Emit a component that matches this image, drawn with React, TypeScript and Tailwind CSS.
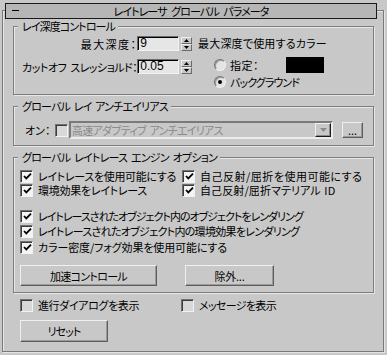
import React from "react";

const BG = "bg-[#c8c8c8]";

function Check({ checked = false, gray = false }: { checked?: boolean; gray?: boolean }) {
  return (
    <span
      className={
        "relative flex items-center justify-center w-[13px] h-[13px] shrink-0 border border-t-[#707070] border-l-[#707070] border-b-[#f2f2f2] border-r-[#f2f2f2] shadow-[inset_1px_1px_0_#3c3c3c] " +
        (gray ? "bg-[#d8d8d8]" : checked ? "bg-[#f4f4f4]" : "bg-[#dcdcdc]")
      }
    >
      {checked && (
        <svg width="9" height="9" viewBox="0 0 9 9" className="ml-[1px] mt-[1px]">
          <path d="M1 4 L3.3 6.4 L8 1.6" fill="none" stroke="#000" strokeWidth="1.8" />
        </svg>
      )}
    </span>
  );
}

function Radio({ selected = false }: { selected?: boolean }) {
  return (
    <span className="relative flex items-center justify-center w-[12px] h-[12px] shrink-0 rounded-full border border-t-[#707070] border-l-[#707070] border-b-[#f0f0f0] border-r-[#f0f0f0] bg-[#e4e4e4] shadow-[inset_1px_1px_0_#9a9a9a]">
      {selected && <span className="w-[4px] h-[4px] rounded-full bg-black" />}
    </span>
  );
}

function Btn({ label, w, h, tr }: { label: string; w: string; h: string; tr: string }) {
  return (
    <div
      className={
        "flex items-center justify-center border border-t-[#f0f0f0] border-l-[#f0f0f0] border-b-[#5e5e5e] border-r-[#5e5e5e] shadow-[inset_-1px_-1px_0_#9a9a9a] " +
        BG +
        " " +
        w +
        " " +
        h
      }
    >
      <span className={"leading-[14px] whitespace-nowrap " + tr}>{label}</span>
    </div>
  );
}

function Spinner() {
  return (
    <div className="flex flex-col ml-[2px] w-[11px] h-[14px]">
      <div className="flex-1 flex items-center justify-center border border-t-[#f0f0f0] border-l-[#f0f0f0] border-b-[#6a6a6a] border-r-[#6a6a6a]">
        <svg width="5" height="3" viewBox="0 0 5 3">
          <path d="M2.5 0 L5 3 L0 3 Z" fill="#000" />
        </svg>
      </div>
      <div className="flex-1 flex items-center justify-center border border-t-[#f0f0f0] border-l-[#f0f0f0] border-b-[#6a6a6a] border-r-[#6a6a6a]">
        <svg width="5" height="3" viewBox="0 0 5 3">
          <path d="M0 0 L5 0 L2.5 3 Z" fill="#000" />
        </svg>
      </div>
    </div>
  );
}

function Input({ value }: { value: string }) {
  return (
    <div className="flex items-center w-[42px] h-[15px] border border-t-[#6a6a6a] border-l-[#6a6a6a] border-b-[#f2f2f2] border-r-[#f2f2f2] shadow-[inset_1px_1px_0_#000] bg-[#e6e6e6] pl-[2px]">
      <span className="leading-[13px] font-['Liberation_Sans',sans-serif] text-[12px]">{value}</span>
    </div>
  );
}

function Group({
  label,
  tr,
  className,
  children,
}: {
  label: string;
  tr: string;
  className: string;
  children?: React.ReactNode;
}) {
  return (
    <div
      className={
        "relative ml-[10px] w-[361px] border border-[#7e7e7e] shadow-[1px_1px_0_#e6e6e6,inset_1px_1px_0_#e6e6e6] " +
        className
      }
    >
      <span className={"absolute left-[4px] top-[-8px] pl-[4px] pr-[3px] leading-[14px] whitespace-nowrap " + BG + " " + tr}>
        {label}
      </span>
      {children}
    </div>
  );
}

function CheckRow({
  label,
  tr,
  checked = true,
  gray = false,
}: {
  label: string;
  tr: string;
  checked?: boolean;
  gray?: boolean;
}) {
  return (
    <div className="flex items-center h-[14px]">
      <Check checked={checked} gray={gray} />
      <span className={"ml-[5px] leading-[13px] whitespace-nowrap " + tr}>{label}</span>
    </div>
  );
}

export default function App() {
  return (
    <div
      className={
        "w-[387px] h-[355px] overflow-hidden text-black text-[11px] font-['Noto_Sans_CJK_JP','Noto_Sans',sans-serif] [font-feature-settings:'palt'] pt-[10px] pl-[2px] " +
        BG
      }
    >
      <div className="relative w-[382px] h-[342px] border border-[#7a7a7a] shadow-[1px_1px_0_#e6e6e6,inset_1px_1px_0_#e6e6e6]">
        {/* title bar */}
        <div className="absolute left-[2px] top-[-8px] w-[372px] h-[16px] border border-[#1a1a1a] bg-[#b6b6b6] flex items-center">
          <span className="absolute left-[6px] top-[6px] w-[7px] h-[1px] bg-black" />
          <span className="w-full text-center leading-[14px] tracking-[-0.9px] [word-spacing:3px]">
            レイトレーサ グローバル パラメータ
          </span>
        </div>

        {/* group 1 */}
        <Group label="レイ深度コントロール" tr="tracking-[-0.89px]" className="mt-[15px] h-[69px]">
          <div className="flex">
            <div className="w-[178px]">
              <div className="mt-[9px] h-[15px] flex items-center">
                <span className="w-[124px] text-right leading-[14px] whitespace-nowrap tracking-[1.4px]">最大深度：</span>
                <Input value="9" />
                <Spinner />
              </div>
              <div className="mt-[8px] h-[15px] flex items-center">
                <span className="w-[124px] text-right leading-[14px] whitespace-nowrap tracking-[-0.5px] [word-spacing:2px]">
                  カットオフ スレッショルド：
                </span>
                <Input value="0.05" />
                <Spinner />
              </div>
            </div>
            <div className="ml-[6px]">
              <div className="mt-[9px] h-[14px] leading-[14px] whitespace-nowrap tracking-[0.2px]">最大深度で使用するカラー</div>
              <div className="mt-[7px] h-[16px] flex items-center pl-[16px]">
                <Radio />
                <span className="ml-[4px] w-[56px] leading-[14px] tracking-[0.5px]">指定：</span>
                <span className="w-[38px] h-[16px] bg-black" />
              </div>
              <div className="mt-[2px] h-[13px] flex items-center pl-[16px]">
                <Radio selected />
                <span className="ml-[4px] leading-[14px] whitespace-nowrap tracking-[-0.9px]">バックグラウンド</span>
              </div>
            </div>
          </div>
        </Group>

        {/* group 2 */}
        <Group label="グローバル レイ アンチエイリアス" tr="tracking-[-0.8px] [word-spacing:2px]" className="mt-[11px] h-[40px]">
          <div className="mt-[14px] h-[18px] flex items-center pl-[11px]">
            <span className="w-[30px] leading-[14px] whitespace-nowrap">オン：</span>
            <Check gray />
            <div className="ml-[1px] w-[264px] h-[18px] flex items-center border-2 border-t-[#7a7a7a] border-l-[#7a7a7a] border-b-[#ececec] border-r-[#ececec]">
              <span className="flex-1 pl-[1px] leading-[14px] text-[#8a8a8a] whitespace-nowrap tracking-[-0.75px] [word-spacing:2px]">
                高速アダプティブ アンチエイリアス
              </span>
              <div className="w-[16px] h-[14px] flex items-center justify-center border border-t-[#f0f0f0] border-l-[#f0f0f0] border-b-[#1a1a1a] border-r-[#1a1a1a] shadow-[inset_-1px_-1px_0_#8a8a8a]">
                <svg width="7" height="4" viewBox="0 0 7 4">
                  <path d="M0 0 L7 0 L3.5 4 Z" fill="#8a8a8a" />
                </svg>
              </div>
            </div>
            <div className="ml-[9px]">
              <Btn label="..." tr="" w="w-[21px]" h="h-[16px]" />
            </div>
          </div>
        </Group>

        {/* group 3 */}
        <Group
          label="グローバル レイトレース エンジン オプション"
          tr="tracking-[-0.75px] [word-spacing:2px]"
          className="mt-[11px] h-[136px]"
        >
          <div className="pl-[6px]">
            <div className="mt-[11px] flex">
              <div className="w-[162px]">
                <CheckRow label="レイトレースを使用可能にする" tr="tracking-[-0.31px]" />
              </div>
              <CheckRow label="自己反射/屈折を使用可能にする" tr="tracking-[0.5px]" />
            </div>
            <div className="flex">
              <div className="w-[162px]">
                <CheckRow label="環境効果をレイトレース" tr="tracking-[-0.26px]" />
              </div>
              <CheckRow label="自己反射/屈折マテリアル ID" tr="tracking-[0.1px] [word-spacing:1px]" />
            </div>
            <div className="mt-[12px]">
              <CheckRow label="レイトレースされたオブジェクト内のオブジェクトをレンダリング" tr="tracking-[-1px]" />
            </div>
            <div className="mt-[1px]">
              <CheckRow label="レイトレースされたオブジェクト内の環境効果をレンダリング" tr="tracking-[-0.7px]" />
            </div>
            <div className="mt-[2px]">
              <CheckRow label="カラー密度/フォグ効果を使用可能にする" tr="tracking-[-0.12px]" />
            </div>
            <div className="mt-[11px] flex">
              <Btn label="加速コントロール" tr="tracking-[-0.7px]" w="w-[137px]" h="h-[21px]" />
              <div className="ml-[28px]">
                <Btn label="除外..." tr="tracking-[-0.25px]" w="w-[89px]" h="h-[21px]" />
              </div>
            </div>
          </div>
        </Group>

        <div className="mt-[5px] pl-[17px] flex">
          <div className="w-[161px]">
            <CheckRow label="進行ダイアログを表示" tr="tracking-[-0.38px]" checked={false} gray />
          </div>
          <CheckRow label="メッセージを表示" tr="tracking-[-0.66px]" checked={false} gray />
        </div>
        <div className="mt-[8px] pl-[17px]">
          <Btn label="リセット" tr="tracking-[-0.9px]" w="w-[88px]" h="h-[22px]" />
        </div>
      </div>
    </div>
  );
}
